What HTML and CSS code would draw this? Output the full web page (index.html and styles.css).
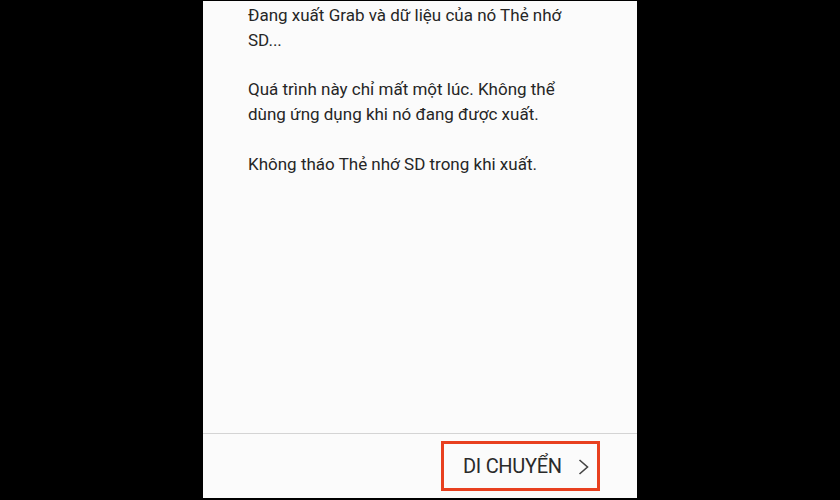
FILE: index.html
```html
<!DOCTYPE html>
<html lang="vi">
<head>
<meta charset="utf-8">
<link rel="stylesheet" href="styles.css">
</head>
<body>
<div class="stage">
  <div class="screen">
    <div class="content">
      <p class="para">Đang xuất Grab và dữ liệu của nó Thẻ nhớ SD...</p>
      <p class="para">Quá trình này chỉ mất một lúc. Không thể dùng ứng dụng khi nó đang được xuất.</p>
      <p class="para">Không tháo Thẻ nhớ SD trong khi xuất.</p>
    </div>
    <div class="footer">
      <div class="btn">
        <span class="btn-label">DI CHUYỂN</span>
        <svg class="chev" width="11" height="16" viewBox="0 0 11 16"><path d="M1.5 1 L9.5 8 L1.5 15" fill="none" stroke="#444" stroke-width="1.6" stroke-linejoin="miter"/></svg>
      </div>
    </div>
  </div>
</div>
</body>
</html>
```
FILE: styles.css
```css
html, body {
  margin: 0;
  padding: 0;
  background: #000;
}
.stage {
  width: 840px;
  height: 500px;
  display: flex;
  justify-content: center;
  padding-top: 1px;
  box-sizing: border-box;
}
.screen {
  width: 434px;
  height: 497px;
  background: #fbfbfb;
  display: flex;
  flex-direction: column;
}
.content {
  flex: 1;
  padding: 2px 30px 0 45px;
  font-family: Roboto, "Noto Sans", sans-serif;
  font-size: 17px;
  line-height: 24.8px;
  color: #262626;
}
.para {
  margin: 0 0 24.8px 0;
  width: 332px;
}
.footer {
  height: 65px;
  border-top: 1.5px solid #d4d4d4;
  display: flex;
  justify-content: flex-end;
  align-items: flex-start;
  padding: 7px 37px 0 0;
  box-sizing: border-box;
}
.btn {
  width: 159px;
  height: 50px;
  box-sizing: border-box;
  border: 3px solid #e8401f;
  display: flex;
  align-items: center;
  padding-left: 19px;
  font-family: Roboto, "Noto Sans", sans-serif;
  font-size: 20px;
  color: #2a2a2a;
}
.btn-label {
  letter-spacing: -0.3px;
}
.chev {
  margin-left: 16px;
  margin-top: 2px;
}
```
